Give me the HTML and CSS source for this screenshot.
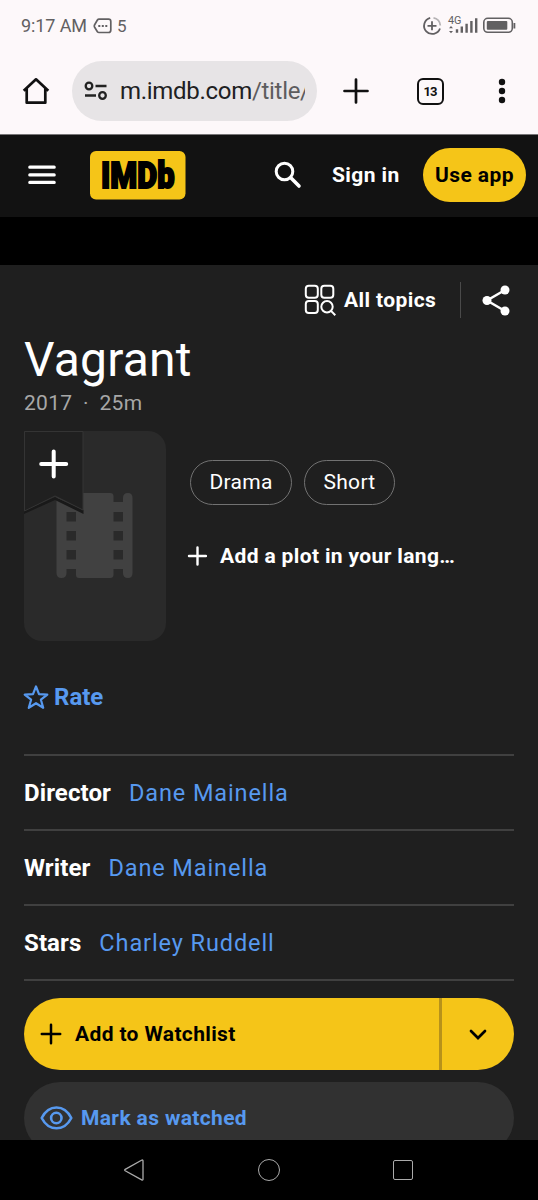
FILE: index.html
```html
<!DOCTYPE html>
<html lang="en">
<head>
<meta charset="utf-8">
<title>Vagrant (2017) - IMDb</title>
<link rel="stylesheet" href="styles.css">
</head>
<body>
<div class="phone">
  <div class="status">
    <span class="clock">9:17 AM</span>
    <svg class="msg" width="19" height="16" viewBox="0 0 19 16"><path d="M6 1.2H15.5Q17.8 1.2 17.8 3.5V12Q17.8 14.5 15.5 14.5H6Q5 14.5 4.4 13.7L1.5 9Q1 8 1.5 7L4.4 2Q5 1.2 6 1.2Z" fill="none" stroke="#626062" stroke-width="1.7"/><path d="M5.3 7h2v2h-2zM8.8 7h2v2h-2zM12.3 7h2v2h-2z" fill="#626062"/></svg>
    <span class="count">5</span>
    <svg class="indicators" width="96" height="22" viewBox="420 14 96 22">
      <g fill="none" stroke="#626062" stroke-width="1.8"><path d="M430.2 16.8A8.2 8.2 0 1 0 440 27.5"/><path d="M433.5 16.8A8.2 8.2 0 0 1 440.3 24.5" stroke="#b5b2b4"/><path d="M432 20.3v9M427.5 24.8h9"/></g>
      <text class="net" x="448" y="23.2" textLength="13.5" lengthAdjust="spacingAndGlyphs">4G</text>
      <path d="M451 25l2 2.3h-4zM451 32.3l2-2.3h-4zM455.8 28.3h2.4v3.5h-2.4zM460.6 25.6h2.4v6.2h-2.4zM465.4 22.8h2.4v9h-2.4zM470.2 20h2.4v11.8h-2.4zM475 17.3h2.4v14.5h-2.4z" fill="#626062"/>
      <rect x="483.8" y="17.3" width="28.5" height="14" rx="4" fill="none" stroke="#626062" stroke-width="1.6"/><rect x="486.8" y="20" width="20.5" height="8.8" rx="1" fill="#626062"/><path d="M513.5 22h1.8v5.5h-1.8z" fill="#626062"/>
    </svg>
  </div>
  <div class="browser">
    <svg class="home" width="28" height="28" viewBox="0 0 28 28"><path d="M1.7 13.8L14 2.3 26.3 13.8M4.7 11.5V25.7H23.3V11.5" fill="none" stroke="#111" stroke-width="2.7" stroke-linejoin="round"/></svg>
    <div class="omnibox">
      <svg width="24" height="20" viewBox="0 0 24 20"><g fill="none" stroke="#222" stroke-width="2.3"><circle cx="5" cy="5" r="3.3"/><circle cx="18.5" cy="14.5" r="3.3"/><path d="M11.5 5H22.5M1 14.5H12"/></g></svg>
      <span class="url">m.imdb.com<span class="path">/title/</span></span>
    </div>
    <svg class="newtab" width="26" height="26" viewBox="0 0 26 26"><path d="M13 1.5v23M1.5 13h23" stroke="#111" stroke-width="2.7" stroke-linecap="round"/></svg>
    <span class="tabs">13</span>
    <svg class="dots" width="8" height="26" viewBox="0 0 8 26" fill="#111"><circle cx="4" cy="4" r="3.2"/><circle cx="4" cy="13" r="3.2"/><circle cx="4" cy="22" r="3.2"/></svg>
  </div>
  <header class="header">
    <svg class="menu" width="28" height="20" viewBox="0 0 28 20"><path d="M1.8 2.2H26.2M1.8 9.9H26.2M1.8 17.4H26.2" stroke="#fff" stroke-width="3.2" stroke-linecap="round"/></svg>
    <svg class="logo" width="96" height="49" viewBox="0 0 96 49"><rect width="95.5" height="48.5" rx="6" fill="#f5c518"/><text class="logotext" x="11" y="37" textLength="73.5" lengthAdjust="spacingAndGlyphs">IMDb</text></svg>
    <svg class="search" width="28" height="28" viewBox="0 0 28 28"><circle cx="10.5" cy="10.5" r="8.3" fill="none" stroke="#fff" stroke-width="3"/><path d="M16.8 16.8L25 25" stroke="#fff" stroke-width="3.6" stroke-linecap="round"/></svg>
    <span class="signin">Sign in</span>
    <span class="useapp">Use app</span>
  </header>
  <div class="strip"></div>
  <main class="main">
    <div class="topics">
      <svg width="32" height="32" viewBox="0 0 32 32" fill="none" stroke="#fff" stroke-width="2"><rect x="1.8" y="1.8" width="12" height="12" rx="3"/><rect x="17.3" y="1.8" width="12" height="12" rx="3"/><rect x="1.8" y="17" width="12" height="12" rx="3"/><circle cx="23" cy="22.7" r="5.7"/><path d="M27 26.9L31.3 31.3"/></svg>
      <span class="alltopics">All topics</span>
      <i class="bar"></i>
      <svg class="share" width="28" height="31" viewBox="0 0 28 31"><path d="M23 5L5 15.5 23 26" fill="none" stroke="#fff" stroke-width="2.5"/><g fill="#fff"><circle cx="23" cy="5" r="4.5"/><circle cx="5" cy="15.5" r="4.5"/><circle cx="23" cy="26" r="4.5"/></g></svg>
    </div>
    <h1 class="title">Vagrant</h1>
    <div class="meta"><span class="year">2017</span><span class="sep">·</span><span class="len">25m</span></div>
    <section class="hero">
      <div class="poster">
        <svg width="142" height="210" viewBox="0 0 142 210"><path fill="#414141" fill-rule="evenodd" d="M37.5 62Q42.5 62 42.5 67V71H52V65Q52 62 55 62H86Q89.5 62 89.5 65V71H99V67Q99 62 104 62 108.5 62 108.5 67V142Q108.5 147 104 147 99 147 99 142V138H89.5V144Q89.5 147 86 147H55Q52 147 52 144V138H42.5V142Q42.5 147 37.5 147 32.5 147 32.5 142V67Q32.5 62 37.5 62ZM42.5 81v9.5H52V81ZM42.5 100v9.5H52V100ZM42.5 119v9.5H52V119ZM89.5 81v9.5H99V81ZM89.5 100v9.5H99V100ZM89.5 119v9.5H99V119Z"/><path d="M0 80L31 66 59.5 79V83L31 69 0 83Z" fill="#191919"/><path d="M.5.5H59V79L31 65 .5 80Z" fill="#202020" stroke="#343434"/><path d="M29.7 20.5V45.5M17.2 33H42.2" stroke="#fff" stroke-width="4" stroke-linecap="round"/></svg>
      </div>
      <div class="info">
        <div class="chips"><span class="chip drama">Drama</span><span class="chip short">Short</span></div>
        <div class="plot"><svg width="20" height="20" viewBox="0 0 20 20"><path d="M10.5 1.5v17M2 10h17" stroke="#fff" stroke-width="2.4" stroke-linecap="round"/></svg><span class="plottext">Add a plot in your lang…</span></div>
      </div>
    </section>
    <div class="rate"><svg width="26" height="25" viewBox="0 0 26 25"><path d="M13 1.500L16 9.100 24.300 9.600 17.900 14.700 20.200 22.800 13 18.200 5.800 22.800 8.100 14.700 1.700 9.600 10 9.100Z" fill="none" stroke="#5799ef" stroke-width="2.200" stroke-linejoin="round"/></svg><span class="ratetext">Rate</span></div>
    <div class="credits">
      <div class="credit"><b class="director">Director</b><a class="dane">Dane Mainella</a></div>
      <div class="credit"><b class="writer">Writer</b><a class="dane">Dane Mainella</a></div>
      <div class="credit"><b class="stars">Stars</b><a class="charley">Charley Ruddell</a></div>
    </div>
    <div class="watchlist">
      <div class="add"><svg width="22" height="22" viewBox="0 0 22 22"><path d="M11 1.800v18.400M1.800 11h18.400" stroke="#000" stroke-width="2.500" stroke-linecap="round"/></svg><span class="addtext">Add to Watchlist</span></div>
      <div class="more"><svg width="20" height="12" viewBox="0 0 20 12"><path d="M3 2L10 9 17 2" fill="none" stroke="#000" stroke-width="2.700" stroke-linecap="round"/></svg></div>
    </div>
    <div class="watched"><svg width="33" height="24" viewBox="0 0 33 24" fill="none" stroke="#5799ef" stroke-width="2.600"><path d="M1.700 12Q7 1.500 16.500 1.500T31.300 12Q26 22.300 16.500 22.300T1.700 12Z" stroke-linejoin="round"/><circle cx="16.300" cy="12" r="5.200"/></svg><span class="watchedtext">Mark as watched</span></div>
  </main>
  <nav class="nav">
    <svg width="22" height="24" viewBox="0 0 22 24"><path d="M18.500 2.300Q20 1.500 20 3V21.200Q20 22.500 18.700 21.900L2.200 12.700Q1.200 12 2.200 11.400Z" fill="none" stroke="#aaa" stroke-width="1.300"/></svg>
    <i class="circle"></i><i class="square"></i>
  </nav>
</div>
</body>
</html>
```
FILE: styles.css
```css
* { box-sizing: border-box; }
body { margin: 0; font-family: Roboto, "Liberation Sans", sans-serif; background: #000; }
svg { flex: none; display: block; }
span, b, a { white-space: nowrap; }
.phone { width: 538px; height: 1200px; overflow: hidden; display: flex; flex-direction: column; }
.status { height: 50px; background: #fdf8fa; display: flex; align-items: center; padding: 1px 22px 0 21px; color: #626062; font-size: 18px; flex: none; }
.clock { width: 66px; letter-spacing: -.1px; }
.msg { margin-left: 6px; }
.count { margin-left: 5px; font-size: 17px; }
.indicators { margin-left: auto; }
.net { font-size: 10.5px; fill: #626062; }
.browser { height: 85px; background: #fdf8fa; border-bottom: 1px solid #777577; display: flex; align-items: center; padding: 0 0 2px 22px; flex: none; }
.omnibox { margin-left: 22px; width: 245px; height: 60px; border-radius: 30px; background: #e7e4e6; display: flex; align-items: center; padding: 0 12px 0 12px; }
.url { margin-left: 12px; flex: 1; overflow: hidden; font-size: 24px; letter-spacing: -.3px; color: #202022; }
.path { color: #5d5c5e; }
.newtab { margin-left: 26px; }
.tabs { margin-left: 48px; width: 27px; height: 27px; border: 2.5px solid #111; border-radius: 6px; font-size: 13px; font-weight: 700; letter-spacing: -1px; padding-right: 1px; display: flex; align-items: center; justify-content: center; color: #111; }
.dots { margin-left: 54px; }
.header { height: 82px; flex: none; background: #121212; display: flex; align-items: center; padding: 0 12px 3px 28px; color: #fff; font-size: 21px; font-weight: 700; }
.logo { margin: 2px 0 0 33.5px; overflow: visible; }
.logotext { font-size: 37px; font-weight: 900; stroke: #000; stroke-width: 2px; }
.search { margin-left: 88.5px; }
.signin { margin-left: 30px; width: 91px; letter-spacing: .4px; }
.useapp { width: 103px; height: 54px; border-radius: 27px; background: #f5c518; color: #000; display: flex; align-items: center; justify-content: center; letter-spacing: .4px; }
.strip { height: 48px; background: #000; flex: none; }
.main { height: 875px; flex: none; background: #1f1f1f; padding: 17px 24px 0; overflow: hidden; color: #fff; }
.topics { height: 36px; display: flex; align-items: center; justify-content: flex-end; padding-right: 4px; }
.alltopics { margin-left: 8px; width: 116px; font-size: 21px; font-weight: 700; letter-spacing: .4px; }
.bar { width: 1px; height: 36px; background: #4a4a4a; }
.share { margin-left: 21px; }
.title { margin: 13px 0 0; height: 58px; line-height: 58px; font-size: 48px; font-weight: 400; letter-spacing: .2px; }
.meta { height: 28px; line-height: 28px; display: flex; font-size: 21px; letter-spacing: .3px; color: #a7a7a7; }
.sep { width: 27px; text-align: center; }
.hero { margin-top: 14px; display: flex; height: 210px; }
.poster { width: 142px; height: 210px; flex: none; border-radius: 0 18px 18px 18px; background: #2a2a2a; overflow: hidden; }
.info { margin-left: 24px; padding-top: 29px; }
.chips { display: flex; gap: 12px; }
.chip { height: 45px; border: 1.5px solid #727272; border-radius: 23px; font-size: 21px; letter-spacing: .3px; display: flex; align-items: center; justify-content: center; padding-bottom: 1px; }
.drama { width: 102px; }
.short { width: 91px; }
.plot { margin: 38px 0 0 -3px; display: flex; align-items: center; height: 26px; }
.plottext { margin-left: 13px; font-size: 21px; font-weight: 700; letter-spacing: .36px; }
.rate { height: 28px; margin: 42px 0 0 -1px; display: flex; align-items: center; color: #5799ef; }
.ratetext { margin-left: 5px; font-size: 24px; font-weight: 700; }
.credits { margin-top: 43px; border-bottom: 2px solid #404040; }
.credit { height: 75px; border-top: 2px solid #404040; display: flex; align-items: center; font-size: 24px; }
.credit b { letter-spacing: .1px; }
.credit a { margin-left: 18px; color: #5799ef; font-size: 23.5px; letter-spacing: .9px; }
.watchlist { margin-top: 17px; height: 72px; border-radius: 36px; background: #f5c518; color: #000; display: flex; }
.add { width: 418px; border-right: 3px solid #b7921a; display: flex; align-items: center; padding-left: 16px; }
.addtext { margin-left: 13px; font-size: 21px; font-weight: 700; letter-spacing: .36px; }
.more { flex: 1; display: flex; align-items: center; justify-content: center; padding-top: 2px; }
.watched { margin-top: 12px; height: 72px; border-radius: 36px; background: #313131; color: #5799ef; display: flex; align-items: center; padding: 0 0 1px 16px; }
.watchedtext { margin-left: 8px; font-size: 21px; font-weight: 700; letter-spacing: .36px; }
.nav { height: 60px; flex: none; display: flex; align-items: center; padding-left: 123px; }
.circle { margin-left: 113px; width: 22px; height: 22px; border: 1.5px solid #aaa; border-radius: 50%; }
.square { margin-left: 113px; width: 20px; height: 20px; border: 1.5px solid #aaa; border-radius: 2px; }
```
